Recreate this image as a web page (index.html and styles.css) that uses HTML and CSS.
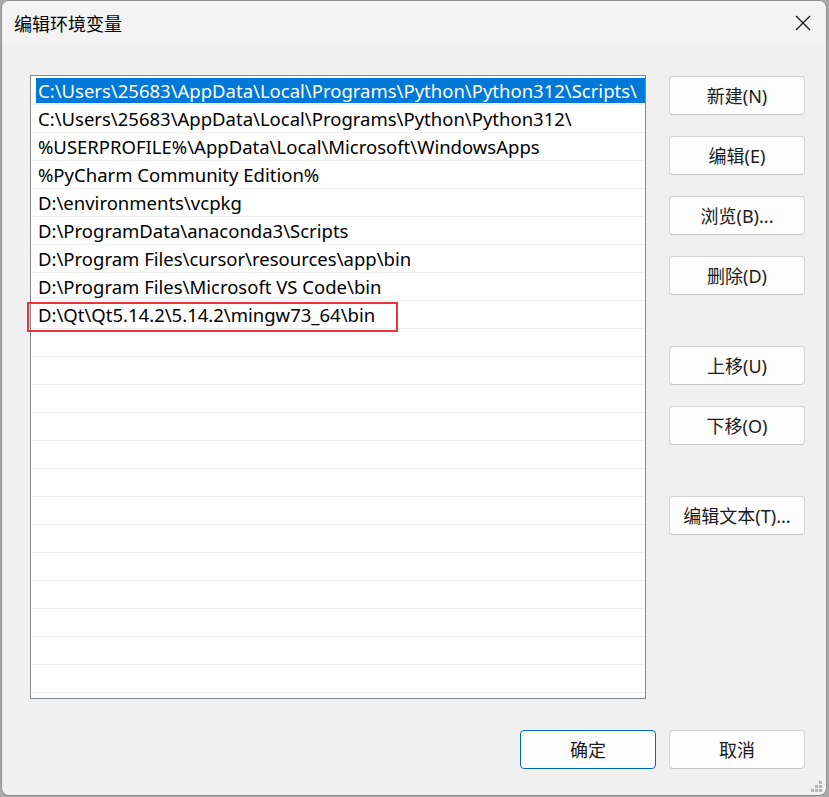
FILE: index.html
```html
<!DOCTYPE html>
<html lang="zh-CN">
<head>
<meta charset="utf-8">
<title>编辑环境变量</title>
<link rel="stylesheet" href="styles.css">
</head>
<body>
<div class="window">
  <div class="titlebar">
    <span class="title">编辑环境变量</span>
    <span class="close">
      <svg width="16" height="16" viewBox="0 0 16 16"><path d="M1 1 L15 15 M15 1 L1 15" stroke="#1a1a1a" stroke-width="1.3" fill="none"/></svg>
    </span>
  </div>
  <div class="content">
    <div class="main">
      <div class="list">
        <div class="row sel">C:\Users\25683\AppData\Local\Programs\Python\Python312\Scripts\</div>
        <div class="row">C:\Users\25683\AppData\Local\Programs\Python\Python312\</div>
        <div class="row">%USERPROFILE%\AppData\Local\Microsoft\WindowsApps</div>
        <div class="row">%PyCharm Community Edition%</div>
        <div class="row">D:\environments\vcpkg</div>
        <div class="row">D:\ProgramData\anaconda3\Scripts</div>
        <div class="row">D:\Program Files\cursor\resources\app\bin</div>
        <div class="row">D:\Program Files\Microsoft VS Code\bin</div>
        <div class="row">D:\Qt\Qt5.14.2\5.14.2\mingw73_64\bin</div>
        <div class="row"></div>
        <div class="row"></div>
        <div class="row"></div>
        <div class="row"></div>
        <div class="row"></div>
        <div class="row"></div>
        <div class="row"></div>
        <div class="row"></div>
        <div class="row"></div>
        <div class="row"></div>
        <div class="row"></div>
        <div class="row"></div>
        <div class="row"></div>
        <div class="mark"></div>
      </div>
      <div class="side">
        <button class="btn">新建(N)</button>
        <button class="btn">编辑(E)</button>
        <button class="btn">浏览(B)...</button>
        <button class="btn">删除(D)</button>
        <button class="btn gap">上移(U)</button>
        <button class="btn">下移(O)</button>
        <button class="btn gap">编辑文本(T)...</button>
      </div>
    </div>
    <div class="footer">
      <button class="btn primary">确定</button>
      <button class="btn">取消</button>
    </div>
  </div>
  <svg class="grip" width="11" height="11" viewBox="0 0 11 11">
    <rect x="8" y="0" width="3" height="3" fill="#b4b4b4"/>
    <rect x="4" y="4" width="3" height="3" fill="#b4b4b4"/>
    <rect x="8" y="4" width="3" height="3" fill="#b4b4b4"/>
    <rect x="0" y="8" width="3" height="3" fill="#b4b4b4"/>
    <rect x="4" y="8" width="3" height="3" fill="#b4b4b4"/>
    <rect x="8" y="8" width="3" height="3" fill="#b4b4b4"/>
  </svg>
</div>
</body>
</html>
```
FILE: styles.css
```css
html, body {
  margin: 0;
  padding: 0;
}
body {
  width: 829px;
  height: 797px;
  overflow: hidden;
  background: #a9a9a9;
  font-family: "Noto Sans", "Noto Sans CJK SC", sans-serif;
  color: #000;
}
.window {
  position: relative;
  box-sizing: border-box;
  margin-left: 1px;
  width: 826px;
  height: 796px;
  border: 1px solid #8f8f8f;
  border-radius: 8px;
  overflow: hidden;
  background: #f0f0f0;
  display: flex;
  flex-direction: column;
}
.titlebar {
  height: 43px;
  flex: none;
  background: #f3f3f3;
  display: flex;
  align-items: center;
  justify-content: space-between;
  padding-left: 12px;
}
.title {
  font-family: "Noto Sans CJK SC", sans-serif;
  font-size: 18px;
  line-height: 24px;
  color: #000;
}
.close {
  width: 46px;
  height: 43px;
  display: flex;
  align-items: center;
  justify-content: center;
  padding-top: 1px;
  box-sizing: border-box;
}
.content {
  flex: 1;
  padding: 31px 20px 0 28px;
  display: flex;
  flex-direction: column;
}
.main {
  display: flex;
  gap: 23px;
}
.list {
  position: relative;
  box-sizing: border-box;
  width: 616px;
  height: 624px;
  border: 1px solid #828790;
  background: #fff;
  padding-top: 1px;
}
.list .row {
  box-sizing: border-box;
  height: 28px;
  margin-left: 1px;
  border-bottom: 1px solid #efefef;
  padding-left: 6px;
  font-size: 18.5px;
  line-height: 27px;
  white-space: nowrap;
  overflow: hidden;
  color: #000;
}
.list .row.sel {
  color: #fff;
  background: linear-gradient(#0078d7, #0078d7) no-repeat;
  background-position: 4px 1px;
  background-size: calc(100% - 4px) 25px;
}
.mark {
  position: absolute;
  left: -4px;
  top: 226px;
  width: 371px;
  height: 30px;
  box-sizing: border-box;
  border: 2px solid #ee3338;
}
.side {
  display: flex;
  flex-direction: column;
  gap: 21px;
  padding-top: 1px;
}
.btn {
  box-sizing: border-box;
  width: 136px;
  height: 39px;
  border: 1px solid #d3d3d3;
  border-bottom-color: #c4c4c4;
  border-radius: 4px;
  background: #fdfdfd;
  font-family: "Noto Sans", "Noto Sans CJK SC", sans-serif;
  font-size: 18px;
  color: #1a1a1a;
  padding: 0;
  line-height: 36px;
  text-align: center;
}
.btn.gap {
  margin-top: 30px;
}
.btn.primary {
  border: 1px solid #0067c0;
}
.footer {
  display: flex;
  justify-content: flex-end;
  gap: 13px;
  margin-top: 31px;
  margin-right: 1px;
}
.grip {
  position: absolute;
  right: 4px;
  bottom: 3px;
}
```
